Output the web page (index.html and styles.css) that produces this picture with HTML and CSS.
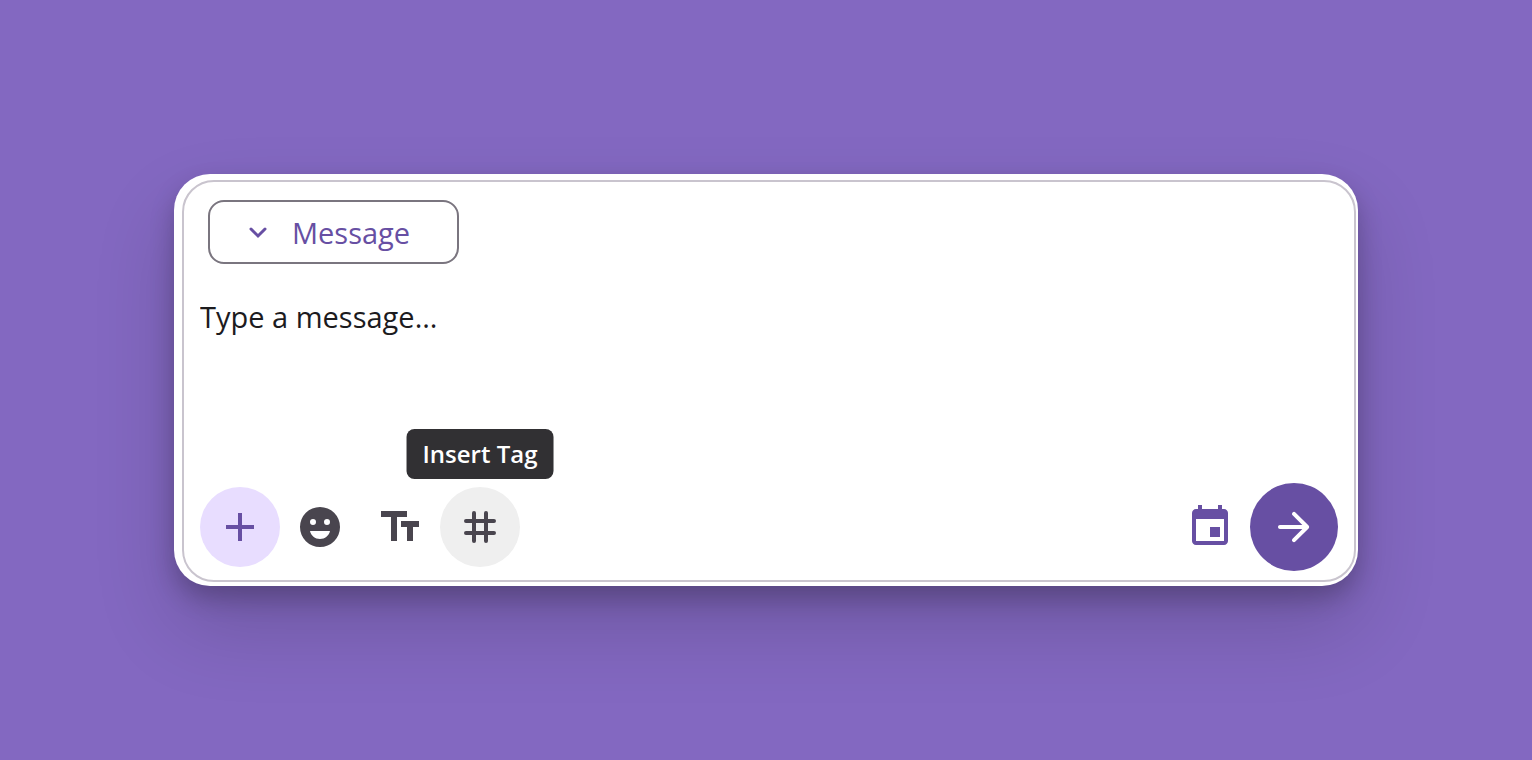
FILE: index.html
```
<!DOCTYPE html>
<html lang="en">

<head>
    <meta charset="utf-8">
    <meta name="viewport" content="width=device-width, initial-scale=1">
    <title>Message composer</title>
    <link rel="stylesheet" href="styles.css">
</head>

<body>
    <main class="card">
        <form class="composer">
            <label class="type-picker">
                <svg class="chevron" viewBox="0 0 36 36" aria-hidden="true"><path d="M11 15l7 7 7-7"/></svg>
                <select class="type-select" aria-label="Message type">
                    <option>Message</option>
                </select>
            </label>

            <textarea class="message-input" aria-label="Message text" placeholder="Type a message..."></textarea>

            <div class="toolbar">
                <button type="button" class="tool add" aria-label="Add">
                    <svg class="icon" viewBox="0 0 24 24"><path d="M19 13h-6v6h-2v-6H5v-2h6V5h2v6h6z"/></svg>
                </button>
                <button type="button" class="tool" aria-label="Emoji">
                    <svg class="icon" viewBox="0 0 24 24"><path fill-rule="evenodd" d="M12 2a10 10 0 1 0 0 20 10 10 0 0 0 0-20zM8.5 8a1.5 1.5 0 1 1 0 3 1.5 1.5 0 0 1 0-3zM15.5 8a1.5 1.5 0 1 1 0 3 1.5 1.5 0 0 1 0-3zM7 14h10c-.5 2.3-2.5 4-5 4s-4.5-1.7-5-4z"/></svg>
                </button>
                <button type="button" class="tool" aria-label="Text size">
                    <svg class="icon" viewBox="0 0 24 24"><path d="M2.5 4v3h5v12h3V7h5V4h-13zm19 5h-9v3h3v7h3v-7h3V9z"/></svg>
                </button>
                <div class="tool-wrap">
                    <span class="tooltip" role="tooltip">Insert Tag</span>
                    <button type="button" class="tool active" aria-label="Insert Tag">
                        <svg class="icon line" viewBox="0 0 24 24"><path d="M9 5v14M15 5v14M5 9h14M5 15h14"/></svg>
                    </button>
                </div>
                <button type="button" class="tool schedule" aria-label="Schedule">
                    <svg class="icon" viewBox="0 0 24 24"><path d="M17 12h-5v5h5v-5zM16 1v2H8V1H6v2H5c-1.1 0-2 .9-2 2v14c0 1.1.9 2 2 2h14c1.1 0 2-.9 2-2V5c0-1.100-.9-2-2-2h-1V1h-2zm3 18H5V8h14v11z"/></svg>
                </button>
                <button type="submit" class="tool send" aria-label="Send">
                    <svg class="icon" viewBox="0 0 24 24"><path d="M5 13h11.17l-4.88 4.88c-.39.39-.39 1.03 0 1.42.39.39 1.02.39 1.41 0l6.59-6.59c.39-.39.39-1.02 0-1.41l-6.58-6.6c-.39-.39-1.02-.39-1.41 0-.39.39-.39 1.02 0 1.41L16.17 11H5c-.55 0-1 .45-1 1s.45 1 1 1z"/></svg>
                </button>
            </div>
        </form>
    </main>
</body>

</html>
```
FILE: styles.css
```
* {
    box-sizing: border-box;
}

body {
    margin: 0;
    min-height: 100vh;
    display: flex;
    align-items: center;
    padding: 24px 174px;
    background-color: #8368c1;
    font-family: "Open Sans", sans-serif;
}

.card {
    flex: 1;
    padding: 6px 2px 4px 8px;
    border-radius: 36px;
    background-color: #fff;
    box-shadow: 0 40px 80px rgba(0, 0, 0, 0.17), 0 12px 24px rgba(0, 0, 0, 0.22);
}

.composer {
    display: flex;
    flex-direction: column;
    padding: 18px 16px 9px;
    border: 2px solid #c9c4ce;
    border-radius: 32px;
}

.type-picker {
    display: flex;
    align-items: center;
    align-self: flex-start;
    gap: 16px;
    margin-left: 8px;
    height: 64px;
    padding: 0 46px 0 30px;
    border: 2px solid #7a757f;
    border-radius: 16px;
    color: #674fa3;
}

.chevron {
    width: 36px;
    height: 36px;
    fill: none;
    stroke: currentColor;
    stroke-width: 3;
    stroke-linecap: round;
}

.type-select {
    appearance: none;
    padding: 0;
    border: none;
    background: none;
    color: inherit;
    font: 500 29px "Open Sans", sans-serif;
    cursor: pointer;
}

.message-input {
    height: 188px;
    margin-top: 31px;
    padding: 0;
    border: none;
    outline: none;
    resize: none;
    background: none;
    color: #1c1b1e;
    font: 29px/44px "Open Sans", sans-serif;
}

.message-input::placeholder {
    color: #1c1b1e;
    opacity: 1;
}

.toolbar {
    display: flex;
    align-items: center;
}

.tool-wrap {
    position: relative;
}

.tool {
    display: flex;
    align-items: center;
    justify-content: center;
    width: 80px;
    height: 80px;
    padding: 0;
    border: none;
    border-radius: 50%;
    background: none;
    color: #49454e;
    cursor: pointer;
}

.add {
    background-color: #e8ddff;
    color: #674fa3;
}

.active {
    background-color: #efefef;
}

.schedule {
    margin-left: auto;
    color: #674fa3;
}

.send {
    width: 88px;
    height: 88px;
    background-color: #674fa3;
    color: #fff;
}

.icon {
    width: 48px;
    height: 48px;
    fill: currentColor;
}

.line {
    fill: none;
    stroke: currentColor;
    stroke-width: 2;
    stroke-linecap: round;
}

.tooltip {
    position: absolute;
    bottom: 100%;
    left: 50%;
    transform: translateX(-50%);
    margin-bottom: 8px;
    padding: 0 16px;
    border-radius: 8px;
    background-color: #313033;
    color: #fff;
    font-size: 24px;
    font-weight: 600;
    line-height: 50px;
    white-space: nowrap;
}
```
